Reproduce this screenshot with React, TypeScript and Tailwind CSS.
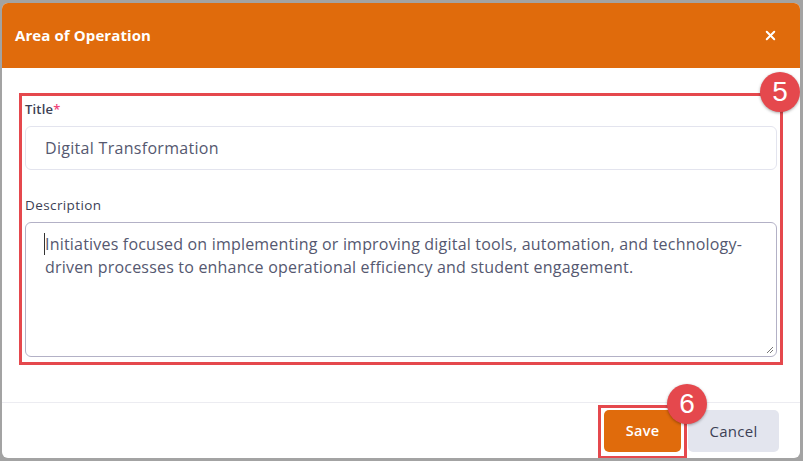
import { X } from 'lucide-react';

const font = { fontFamily: '"Open Sans", "Noto Sans", Arial, sans-serif' };

const Badge = ({ n, className }: { n: string; className: string }) => (
    <div className={`absolute w-[40px] h-[40px] rounded-full bg-[#e5484d] text-white flex items-center justify-center text-[28px] leading-none shadow-[0_1px_3px_rgba(0,0,0,0.35)] ${className}`} style={{ fontFamily: 'Arial, "Liberation Sans", sans-serif' }}>
        {n}
    </div>
);

const App = () => {
    return (
        <div className="w-[803px] h-[461px] bg-[#a3a3a3] pt-[3px] pl-[2px] overflow-hidden" style={font}>
            <div className="w-[798px] h-[455px] bg-white rounded-[6px] overflow-hidden flex flex-col">
                <div className="h-[65px] shrink-0 bg-[#e06b0c] flex items-center justify-between pl-[13px] pr-[22px]">
                    <h3 className="text-white text-[15px] font-bold tracking-[0.1px]">Area of Operation</h3>
                    <X size={15} strokeWidth={3.2} className="text-white" />
                </div>

                <div className="flex-1 pt-[32px] px-[23px]">
                    <div className="relative">
                        <div className="absolute -top-[7px] -left-[6px] -right-[6px] -bottom-[8px] border-[3px] border-[#e5484d] pointer-events-none" />
                        <Badge n="5" className="-top-[28px] -right-[23px]" />
                        <label className="block text-[13px] font-semibold text-[#3c3f55] leading-[18px] tracking-[0.2px]">
                            Title<span className="text-[#f0457a]">*</span>
                        </label>
                        <div className="mt-[8px] h-[44px] border border-[#e3e4ee] rounded-[6px] flex items-center pl-[19px] text-[16px] tracking-[0.3px] text-[#555870]">
                            Digital Transformation
                        </div>
                        <label className="block mt-[26px] text-[13.5px] font-medium text-[#3c3f55] leading-[18px] tracking-[0.4px]">Description</label>
                        <div className="relative mt-[8px] h-[135px] border border-[#b3b1c6] rounded-[6px] pl-[19px] pr-[20px] pt-[10px] text-[16px] tracking-[0.2px] leading-[23px] text-[#555870]">
                            <span className="border-l border-[#333] -ml-px" />Initiatives focused on implementing or improving digital tools, automation, and technology-driven processes to enhance operational efficiency and student engagement.
                            <svg className="absolute right-[2px] bottom-[2px]" width="8" height="8" viewBox="0 0 8 8">
                                <path d="M7 1 L1 7 M7 4 L4 7" stroke="#777" strokeWidth="1" />
                            </svg>
                        </div>
                    </div>
                </div>

                <div className="h-[56px] shrink-0 border-t border-[#ececf1] flex items-start justify-end gap-[7px] pt-[7px] pr-[21px]">
                    <div className="relative">
                        <div className="absolute -top-[5px] -left-[6px] -right-[6px] -bottom-[7px] border-[3px] border-[#e5484d] pointer-events-none" />
                        <Badge n="6" className="-top-[26px] -right-[26px]" />
                        <button className="w-[77px] h-[42px] rounded-[5px] bg-[#e06b0c] text-white text-[14.5px] font-semibold tracking-[0.3px]">Save</button>
                    </div>
                    <button className="w-[91px] h-[42px] rounded-[5px] bg-[#e3e5ee] text-[#3c3f55] text-[15px] font-medium tracking-[0.3px]">Cancel</button>
                </div>
            </div>
        </div>
    );
};

export default App;
